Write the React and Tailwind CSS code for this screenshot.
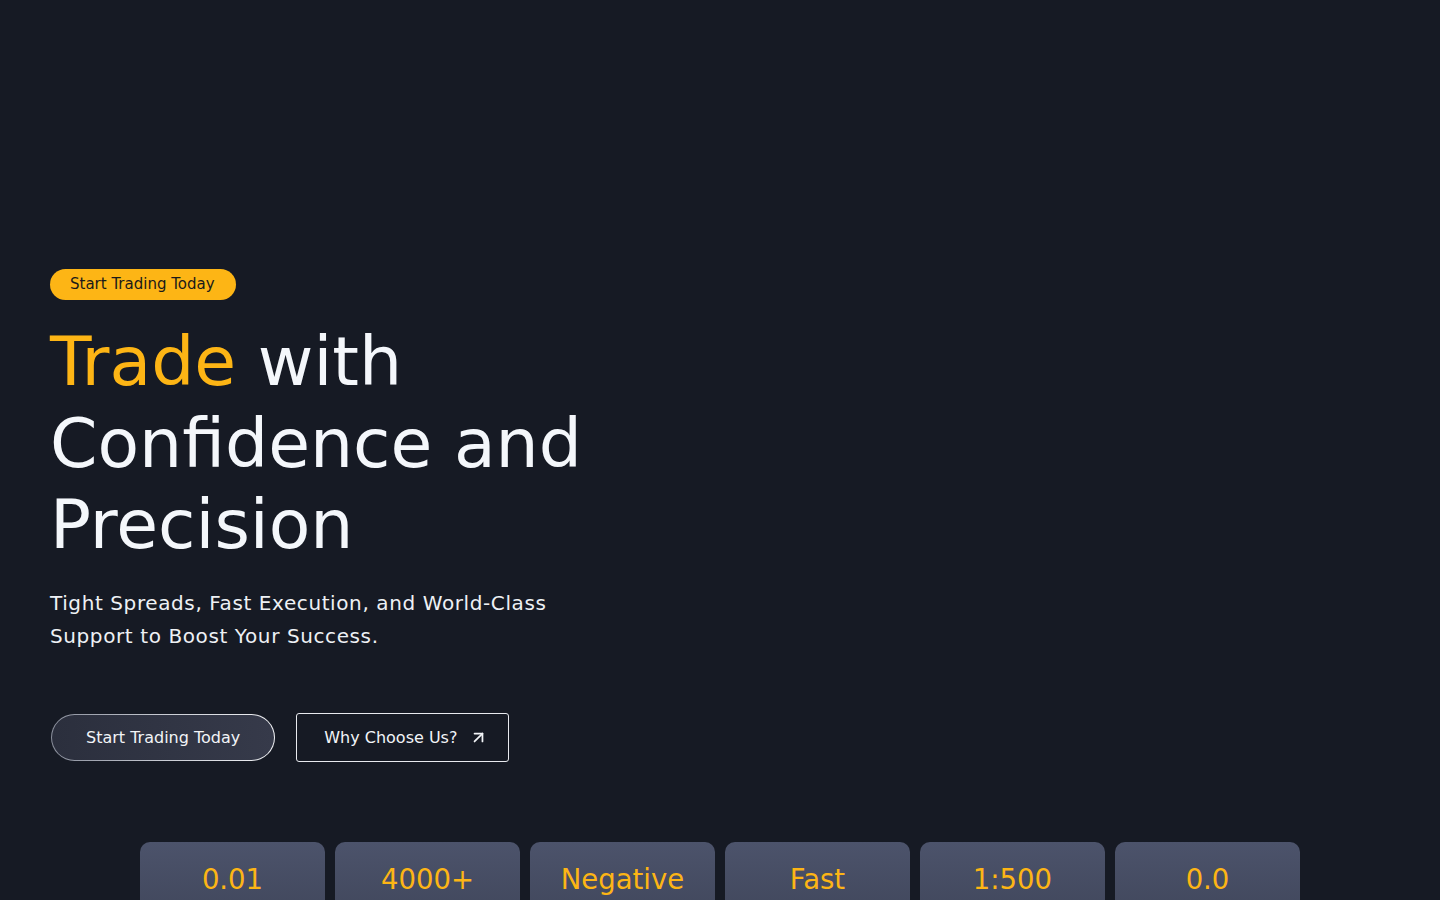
import { ArrowUpRight } from 'lucide-react';

const stats = ['0.01', '4000+', 'Negative', 'Fast', '1:500', '0.0'];

export default function App() {
    return (
        <div
            className="w-full h-[900px] overflow-hidden bg-[#161a24] text-white"
            style={{ fontFamily: '"DejaVu Sans", Verdana, sans-serif' }}
        >
            {/* Hero */}
            <section className="pt-[269px] px-[50px]">
                <div className="w-[560px]">
                    <span className="inline-flex items-center h-[31px] pl-[20px] pr-[21px] rounded-full bg-[#fdb515] text-[#1a1a1a] text-[15px]">
                        Start Trading Today
                    </span>

                    <h1 className="mt-[21px] text-[68px] leading-[81.6px] font-normal text-[#f4f7fb]">
                        <span className="text-[#fdb515]">Trade</span> with
                        Confidence and Precision
                    </h1>

                    <p className="mt-[21px] text-[20px] leading-[33px] tracking-[0.03em] text-[#eef1f5]">
                        Tight Spreads, Fast Execution, and World-Class
                        Support to Boost Your Success.
                    </p>
                </div>

                <div className="mt-[60px] ml-px flex items-center gap-[21px]">
                    <div className="p-px rounded-full bg-gradient-to-r from-[#8a8f9c] via-[#c9ccd4] to-[#f2f3f6]">
                        <button className="h-[45px] px-[34px] pt-px rounded-full bg-gradient-to-r from-[#2b2f3d] to-[#363a4a] text-[16px] text-[#f2f4f7]">
                            Start Trading Today
                        </button>
                    </div>
                    <button className="h-[49px] pl-[27px] pr-[20px] pt-px flex items-center gap-[12px] rounded-[3px] border border-[#e8eaef] text-[16px] text-[#f2f4f7]">
                        Why Choose Us?
                        <ArrowUpRight size={19} strokeWidth={2.2} />
                    </button>
                </div>
            </section>

            {/* Stats */}
            <div className="mt-[80px] flex justify-center gap-[10px]">
                {stats.map((s) => (
                    <div
                        key={s}
                        className="w-[185px] h-[120px] rounded-t-[10px] bg-gradient-to-b from-[#4c536b] to-[#3a4053] flex justify-center pt-[18px]"
                    >
                        <span className="text-[27.5px] leading-[38px] text-[#fdb515]">
                            {s}
                        </span>
                    </div>
                ))}
            </div>
        </div>
    );
}
